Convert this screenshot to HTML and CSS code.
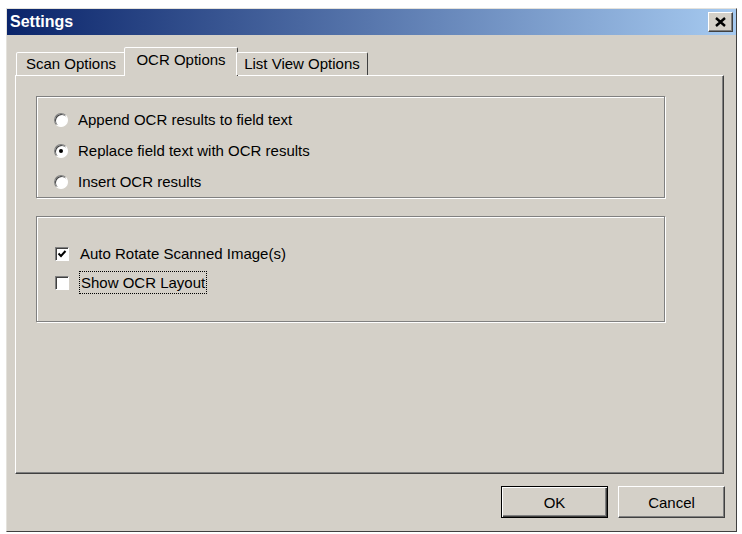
FILE: index.html
```html
<!DOCTYPE html>
<html lang="en">
<head>
    <meta charset="UTF-8">
    <title>Settings</title>
    <link rel="stylesheet" href="styles.css">
</head>
<body>

    <div class="window">
        <div class="titlebar">
            <span class="title">Settings</span>
            <span class="close">
                <svg width="11" height="10" viewBox="0 0 11 10">
                    <path d="M1 1 L10 9 M10 1 L1 9" stroke="#000" stroke-width="2.4" fill="none"/>
                </svg>
            </span>
        </div>

        <div class="content">
            <div class="tabs">
                <div class="tab tab-scan">Scan Options</div>
                <div class="tab tab-ocr active">OCR Options</div>
                <div class="tab tab-list">List View Options</div>
            </div>

            <div class="panel">
                <div class="group group-radios">
                    <div class="option"><span class="radio"></span>Append OCR results to field text</div>
                    <div class="option"><span class="radio checked"></span>Replace field text with OCR results</div>
                    <div class="option"><span class="radio"></span>Insert OCR results</div>
                </div>

                <div class="group group-checks">
                    <div class="option">
                        <span class="check">
                            <svg width="10" height="10" viewBox="0 0 10 10">
                                <path d="M1.5 4.5 L4 7 L8.5 2" stroke="#000" stroke-width="2" fill="none"/>
                            </svg>
                        </span>Auto Rotate Scanned Image(s)
                    </div>
                    <div class="option"><span class="check"></span><span class="focus">Show OCR Layout</span></div>
                </div>
            </div>

            <div class="buttons">
                <button class="btn default">OK</button>
                <button class="btn">Cancel</button>
            </div>
        </div>
    </div>

</body>
</html>
```

FILE: styles.css
```css
* {
    box-sizing: border-box;
}

body {
    margin: 0;
    background: #fff;
    font-family: "Liberation Sans", Arial, sans-serif;
    font-size: 15px;
    color: #000;
}

.window {
    margin: 8px 0 0 6px;
    width: 731px;
    height: 524px;
    background: #d4d0c8;
    border: 1px solid;
    border-color: #e4e2dc #404040 #404040 #e4e2dc;
    display: flex;
    flex-direction: column;
}

.titlebar {
    height: 26px;
    background: linear-gradient(to right, #0a246a, #a6caf0);
    display: flex;
    align-items: center;
    justify-content: space-between;
    padding: 0 3px 0 3px;
}

.title {
    color: #fff;
    font-weight: bold;
    font-size: 16px;
}

.close {
    width: 25px;
    height: 20px;
    background: #d4d0c8;
    border: 1px solid;
    border-color: #fff #404040 #404040 #fff;
    box-shadow: inset -1px -1px #808080;
    display: flex;
    align-items: center;
    justify-content: center;
}

.content {
    padding: 12px 11px 0 8px;
}

.tabs {
    display: flex;
    align-items: flex-end;
    height: 29px;
    margin-bottom: -1px;
    padding-left: 1px;
    position: relative;
    z-index: 1;
}

.tab {
    height: 23px;
    margin-bottom: 1px;
    background: #d4d0c8;
    border: 1px solid;
    border-bottom: none;
    border-color: #fff #404040 transparent #fff;
    border-radius: 2px 2px 0 0;
    text-align: center;
    line-height: 22px;
}

.tab-scan {
    width: 110px;
}

.tab-ocr {
    width: 110px;
}

.tab-list {
    width: 132px;
}

.tab.active {
    height: 29px;
    margin: 0 -2px;
    padding-bottom: 3px;
    width: 114px;
    line-height: 24px;
}

.panel {
    height: 399px;
    margin-right: 1px;
    border: 1px solid;
    border-color: #fff #404040 #404040 #fff;
    box-shadow: inset -1px -1px #808080;
    padding: 20px 0 0 20px;
}

.group {
    width: 629px;
    border: 1px solid #808080;
    box-shadow: inset 1px 1px #fff, 1px 1px #fff;
    display: flex;
    flex-direction: column;
}

.group-radios {
    height: 102px;
    padding: 7px 0 0 17px;
}

.group-radios .option {
    height: 31px;
}

.group-checks {
    height: 106px;
    margin-top: 18px;
    padding: 22px 0 0 18px;
}

.group-checks .option {
    height: 29px;
}

.option {
    display: flex;
    align-items: center;
}

.radio {
    width: 14px;
    height: 14px;
    margin-right: 10px;
    border-radius: 50%;
    background: #fff;
    border: 1px solid;
    border-color: #808080 #fff #fff #808080;
    box-shadow: inset 1px 1px #404040;
    position: relative;
}

.radio.checked::after {
    content: "";
    position: absolute;
    left: 4px;
    top: 4px;
    width: 4px;
    height: 4px;
    border-radius: 50%;
    background: #000;
}

.check {
    width: 14px;
    height: 14px;
    margin-right: 11px;
    background: #fff;
    border: 1px solid;
    border-color: #808080 #fff #fff #808080;
    box-shadow: inset 1px 1px #404040;
    display: flex;
    align-items: center;
    justify-content: center;
}

.focus {
    margin-left: -1px;
    padding: 2px 1px;
    border: 1px dotted #000;
}

.buttons {
    display: flex;
    justify-content: flex-end;
    gap: 10px;
    margin-top: 12px;
}

.btn {
    width: 107px;
    height: 32px;
    font-family: inherit;
    font-size: 15px;
    color: #000;
    background: #d4d0c8;
    border: 1px solid;
    border-color: #fff #404040 #404040 #fff;
    box-shadow: inset -1px -1px #808080;
    padding: 0;
}

.btn.default {
    border: 1px solid #000;
    box-shadow: inset 1px 1px #fff, inset -1px -1px #404040, inset -2px -2px #808080;
}
```
